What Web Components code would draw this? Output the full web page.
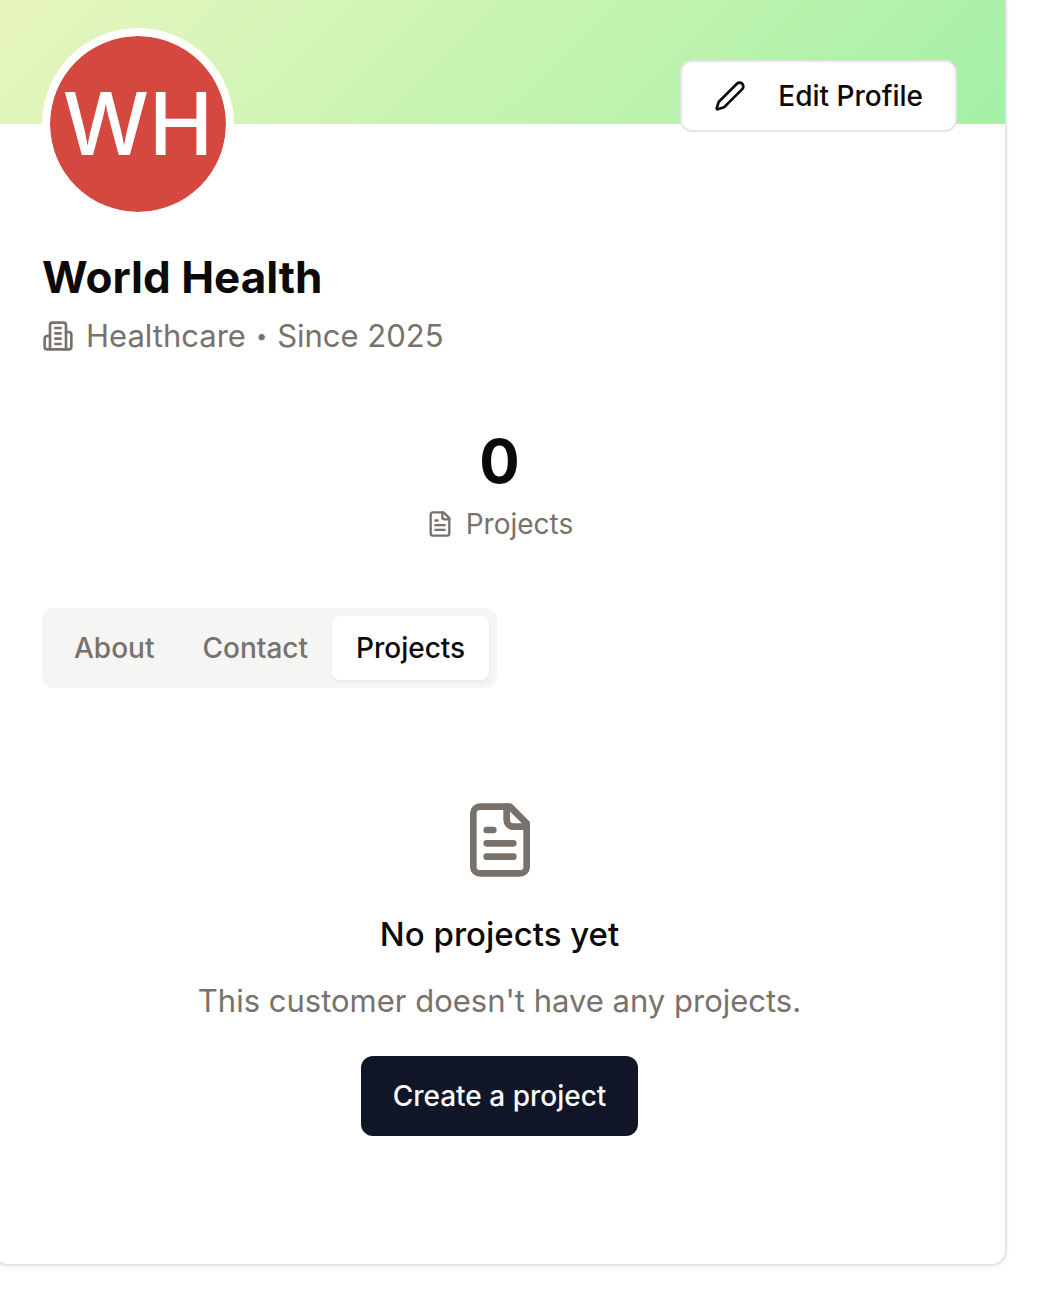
<!DOCTYPE html>
<html lang="en">
<head>
<meta charset="utf-8">
<title>World Health</title>
<style>
  body { margin: 0; background: #fff; color: #0c0a09; font-family: Inter, "Liberation Sans", sans-serif; overflow-x: hidden; }
</style>
</head>
<body>
<profile-card>
  <profile-header slot="header" initials="WH" name="World Health" industry="Healthcare" since="Since 2025">
    <ui-button variant="outline" icon="pencil">Edit Profile</ui-button>
  </profile-header>
  <profile-stat value="0" icon="file">Projects</profile-stat>
  <tab-list tabs="About,Contact,Projects" selected="Projects"></tab-list>
  <empty-state icon="file" heading="No projects yet">
    This customer doesn't have any projects.
    <ui-button slot="action" variant="primary">Create a project</ui-button>
  </empty-state>
</profile-card>
<script>
const ICONS = {
  pencil: '<path d="M21.174 6.812a1 1 0 0 0-3.986-3.987L3.842 16.174a2 2 0 0 0-.5.83l-1.321 4.352a.5.5 0 0 0 .623.622l4.353-1.32a2 2 0 0 0 .83-.497z"/>',
  building: '<path d="M6 22V4a2 2 0 0 1 2-2h8a2 2 0 0 1 2 2v18Z"/><path d="M6 12H4a2 2 0 0 0-2 2v6a2 2 0 0 0 2 2h2"/><path d="M18 9h2a2 2 0 0 1 2 2v9a2 2 0 0 1-2 2h-2"/><path d="M10 6h4M10 10h4M10 14h4M10 18h4"/>',
  file: '<path d="M15 2H6a2 2 0 0 0-2 2v16a2 2 0 0 0 2 2h12a2 2 0 0 0 2-2V7Z"/><path d="M14 2v4a2 2 0 0 0 2 2h4"/><path d="M10 9H8M16 13H8M16 17H8"/>'
};

class BaseElement extends HTMLElement {
  connectedCallback() {
    if (!this.shadowRoot) this.attachShadow({ mode: 'open' }).innerHTML = this.render();
  }
}

customElements.define('ui-icon', class extends BaseElement {
  render() {
    return `<style>
      :host { display: block; flex: none; width: 32px; height: 32px; }
      svg { display: block; width: 100%; height: 100%; }
    </style>
    <svg viewBox="0 0 24 24" fill="none" stroke="currentColor" stroke-width="2" stroke-linecap="round" stroke-linejoin="round" aria-hidden="true">${ICONS[this.getAttribute('name')]}</svg>`;
  }
});

customElements.define('ui-button', class extends BaseElement {
  render() {
    const icon = this.getAttribute('icon');
    return `<style>
      :host { display: inline-block; flex: none; }
      button { display: flex; align-items: center; gap: 32px; box-sizing: border-box; padding: 0 32px; border: 0; border-radius: 12px;
        font: 500 28px/40px Inter, "Liberation Sans", sans-serif; white-space: nowrap; cursor: pointer; }
      .outline { height: 72px; border: 2px solid #e5e5e5; background: #fff; color: #0c0a09; }
      .primary { height: 80px; background: #101628; color: #fafaf9; }
    </style>
    <button type="button" class="${this.getAttribute('variant')}">${icon ? `<ui-icon name="${icon}"></ui-icon>` : ''}<slot></slot></button>`;
  }
});

customElements.define('profile-card', class extends BaseElement {
  render() {
    return `<style>
      :host { display: block; margin: 0 43px 28px -8px; border: 2px solid #e5e5e5; border-top: 0; border-radius: 0 0 16px 16px;
        background: #fff; box-shadow: 0 2px 4px rgba(0,0,0,.05); }
      .banner { height: 124px; background: linear-gradient(135deg, #e8f5bb 0%, #dcf5bb 18%, #c4f3b1 55%, #a3f0a6 100%); }
      .body { padding: 0 48px 128px; }
    </style>
    <div class="banner"></div>
    <div class="body"><slot name="header"></slot><slot></slot></div>`;
  }
});

customElements.define('profile-header', class extends BaseElement {
  render() {
    const a = n => this.getAttribute(n);
    return `<style>
      :host { display: block; margin-top: -96px; }
      .top { display: flex; justify-content: space-between; align-items: flex-start; }
      .action { padding-top: 32px; }
      .avatar { display: flex; align-items: center; justify-content: center; box-sizing: border-box; width: 192px; height: 192px;
        border: 8px solid #fff; border-radius: 50%; background: #d5483f; background-clip: padding-box; color: #fff; font-size: 86px; line-height: 1; font-weight: 500; }
      h1 { margin: 28px 0 6px; font-size: 44px; line-height: 58px; font-weight: 700; }
      .meta, .facts { display: flex; align-items: center; }
      .meta { gap: 12px; margin: 0; color: #78716c; font-size: 31px; line-height: 48px; }
      .facts { gap: 10px; }
      .dot { font-size: 20px; }
    </style>
    <div class="top"><div class="avatar">${a('initials')}</div><div class="action"><slot></slot></div></div>
    <h1>${a('name')}</h1>
    <p class="meta"><ui-icon name="building"></ui-icon><span class="facts"><span>${a('industry')}</span><span class="dot">•</span><span>${a('since')}</span></span></p>`;
  }
});

customElements.define('profile-stat', class extends BaseElement {
  render() {
    return `<style>
      :host { display: flex; flex-direction: column; align-items: center; gap: 14px; margin-top: 72px; }
      .value { font-size: 60px; line-height: 58px; font-weight: 700; }
      .label { display: flex; align-items: center; gap: 12px; color: #78716c; font-size: 28px; line-height: 40px; }
      ui-icon { width: 28px; height: 28px; }
    </style>
    <div class="value">${this.getAttribute('value')}</div>
    <div class="label"><ui-icon name="${this.getAttribute('icon')}"></ui-icon><span><slot></slot></span></div>`;
  }
});

customElements.define('tab-list', class extends BaseElement {
  render() {
    const selected = this.getAttribute('selected');
    return `<style>
      :host { display: flex; margin-top: 64px; }
      [role=tablist] { display: flex; padding: 8px; border-radius: 12px; background: #f5f5f4; }
      button { height: 64px; padding: 0 24px; border: 0; border-radius: 8px; background: none; color: #78716c;
        font: 500 28px/40px Inter, "Liberation Sans", sans-serif; cursor: pointer; }
      [aria-selected=true] { background: #fff; color: #0c0a09; box-shadow: 0 2px 4px rgba(0,0,0,.06); }
    </style>
    <div role="tablist">${this.getAttribute('tabs').split(',').map(t => `<button type="button" role="tab" aria-selected="${t === selected}">${t}</button>`).join('')}</div>`;
  }
});

customElements.define('empty-state', class extends BaseElement {
  render() {
    return `<style>
      :host { display: flex; flex-direction: column; align-items: center; margin-top: 112px; text-align: center; }
      ui-icon { width: 80px; height: 80px; color: #78716c; }
      h3 { margin: 32px 0 20px; font-size: 33px; line-height: 44px; font-weight: 500; }
      p { margin: 0 0 30px; color: #78716c; font-size: 31px; line-height: 50px; }
    </style>
    <ui-icon name="${this.getAttribute('icon')}"></ui-icon>
    <h3>${this.getAttribute('heading')}</h3>
    <p><slot></slot></p>
    <slot name="action"></slot>`;
  }
});
</script>
</body>
</html>
